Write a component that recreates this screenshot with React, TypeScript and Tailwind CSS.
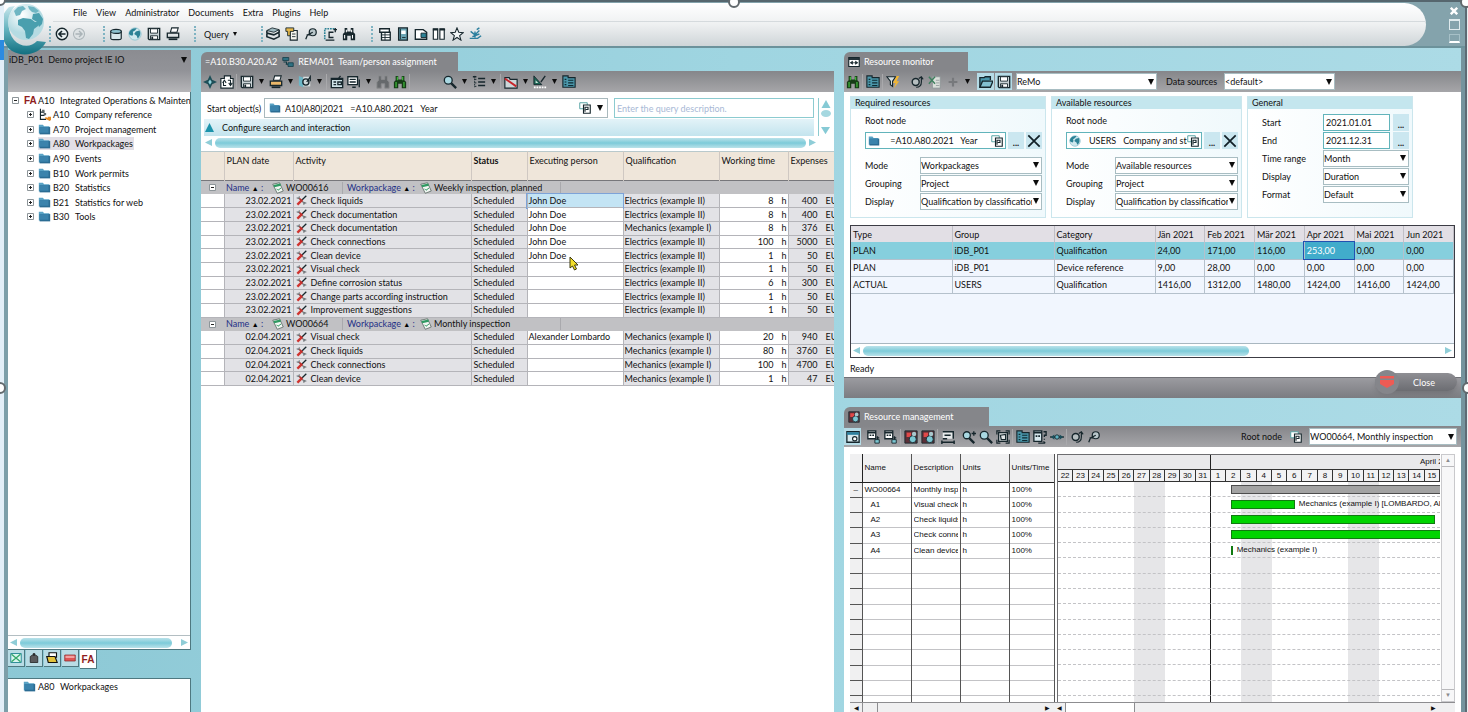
import React from 'react';

const INK = '#16262c';
const TEAL = '#2c8296';

/* Small 16x16 drawings used by the toolbars */
const icons: Record<string, React.ReactNode> = {
  back: <><circle cx="8" cy="8" r="6.5" fill="#e8f0f2" stroke={INK} strokeWidth="1.6" /><path d="M12 8H5M8 4.5L4.5 8L8 11.5" fill="none" stroke={INK} strokeWidth="1.8" /></>,
  forward: <><circle cx="8" cy="8" r="6.3" fill="#dde2e4" stroke="#aab4b8" strokeWidth="1.2" /><path d="M4 8h7M8 4.5L11.5 8L8 11.5" fill="none" stroke="#aab4b8" strokeWidth="1.6" /></>,
  database: <><path d="M2 5v8c0 2 12 2 12 0V5z" fill="#d5e6ea" stroke={INK} strokeWidth="1.3" /><ellipse cx="8" cy="5" rx="6" ry="2.3" fill="#8cc3d0" stroke={INK} strokeWidth="1.3" /></>,
  globe: <><circle cx="8" cy="8" r="7" fill="#cfe8ee" stroke="#8cc3d0" /><path d="M1 7c1-4 5-6 9-5.5L8 4 5.5 5.5 6 8l-1 2-3-1zM9 5l4-1c2 3 1 7-2 9l-1-3-3-2z" fill={TEAL} /></>,
  save: <><path d="M1.5 1.5h13v13h-12l-1-1z" fill="#c9d3d6" stroke={INK} strokeWidth="1.5" /><path d="M4 2h8v5H4zM4 10h8v4H4z" fill="#fff" stroke={INK} /><path d="M6 11v3" stroke={INK} strokeWidth="2" /></>,
  print: <><path d="M5 6l1.5-5H14l-1.5 5z" fill="#fff" stroke={INK} strokeWidth="1.2" /><path d="M1.5 7h13v5h-13z" fill="#dfe4e5" stroke={INK} strokeWidth="1.5" /><path d="M3 14h10" stroke={INK} strokeWidth="2" /></>,
  printOrange: <><path d="M5 6l1.5-5H14l-1.5 5z" fill="#fff" stroke={INK} strokeWidth="1.2" /><path d="M1.5 7h13v5h-13z" fill="#e9b76a" stroke={INK} strokeWidth="1.5" /><path d="M3 14h10" stroke={INK} strokeWidth="2" /></>,
  stack: <><path d="M1 4l6-3 8 2-6 3z" fill="#9fb9c0" stroke={INK} /><path d="M1 4v3l8 2 6-3V3M1 8v3l8 3 6-3V7" fill="none" stroke={INK} strokeWidth="1.8" /></>,
  key: <><path d="M6 4h8v11H6z" fill="#f5f5ee" stroke={INK} strokeWidth="1.3" /><path d="M1 1h9v4H6v5H3V5H1z" fill="#e6b84c" stroke={INK} /><path d="M8 8h4M8 11h4" stroke={INK} /></>,
  wrench: <><circle cx="10" cy="6" r="4" fill="#b8c6ca" stroke={INK} strokeWidth="1.4" /><path d="M2 14l2-5 6-3M3 9h4" fill="none" stroke={INK} strokeWidth="1.5" /></>,
  corner: <><path d="M2 14V2h12" fill="none" stroke={TEAL} strokeWidth="1.8" strokeDasharray="2 1" /><path d="M12 6H7v6h5M3 15h10M14 1v5M12 3h4" fill="none" stroke={INK} strokeWidth="1.5" /></>,
  binoc: <><path d="M3 1h3v4h4V1h3v5l2 2v7H10v-5H6v5H1V8l2-2z" fill={INK} /><path d="M3 9v4M12 9v4M5 3v3M11 3v3" stroke="#fff" strokeWidth="1.2" /></>,
  binocGreen: <><path d="M3 1h3v4h4V1h3v5l2 2v7H10v-5H6v5H1V8l2-2z" fill="#153c16" /><path d="M3.5 8v6M12.5 8v6M5 2v4M11 2v4" stroke="#3fb53a" strokeWidth="1.5" /></>,
  binocDim: <path d="M3 1h3v4h4V1h3v5l2 2v7H10v-5H6v5H1V8l2-2z" fill="#66696c" stroke="#8a8b8e" />,
  sheet: <><path d="M2 2h11v4H2zM4 6h10v9H4z" fill="#fff" stroke={INK} strokeWidth="1.5" /><path d="M4 9h10M4 12h10M8 6v9" stroke={INK} /></>,
  book: <><path d="M3 1h10v14H3z" fill="#6aa5b4" stroke={INK} strokeWidth="1.5" /><path d="M6 4h5v4H6z" fill="#fff" /><path d="M5 2v12M7 12h4" stroke={INK} /></>,
  windowDoc: <><path d="M1.5 3h9l4 3v8h-13z" fill="#fff" stroke={INK} strokeWidth="1.5" /><path d="M8 7h6v5H8z" fill={TEAL} stroke={INK} /></>,
  columns: <><path d="M1.5 2h5v12h-5zM9 2h5v12H9z" fill="#fff" stroke={INK} strokeWidth="1.3" /><path d="M1 3h6M9 3h6" stroke={INK} strokeWidth="2" /></>,
  star: <path d="M8 1l2 5 5 .5-4 3.3L12.5 15 8 12l-4.500 3L5 9.800 1 6.5 6 6z" fill="#f2f6f7" stroke={INK} strokeWidth="1.2" />,
  burst: <path d="M2 13h9l4-3M8 12V5M8 9L3 5M8 9l5-5M10 3l3-2M5 11l8-3" fill="none" stroke="#2b7f9e" strokeWidth="1.6" />,
  diamond: <><path d="M8 0l2.5 5.5L16 8l-5.5 2.500L8 16l-2.500-5.500L0 8l5.500-2.500z" fill="#1e4f58" /><path d="M8 5l2 3-2 3-2-3z" fill="#8fd3dc" /></>,
  reload: <><path d="M1 4h4V1h7v3h3v11H1z" fill="#fff" stroke={INK} strokeWidth="1.3" /><path d="M4 7v5h3M3 9l2-3 2 3M12 11V6H9M10 9l2 3 2-3" fill="none" stroke={INK} strokeWidth="1.2" /></>,
  refGear: <><path d="M1 1l5 2v11l-5-2z" fill="#6db6c6" /><path d="M6 2h8v11H6z" fill="#d9e0e2" /><circle cx="9" cy="8" r="3.5" fill="#cfd8da" stroke={INK} strokeWidth="1.5" /><path d="M10 8l4-6v5" fill="none" stroke={INK} strokeWidth="1.5" /></>,
  form: <><path d="M1.5 4h13v10.5h-13z" fill="#cfe3e8" stroke={INK} strokeWidth="1.5" /><path d="M2 5h12M4 8h3M4 11h3M9 8h4v3H9zM12 1l-3 4" fill="none" stroke={INK} strokeWidth="1.5" /></>,
  page: <><path d="M1 2h11v9H1z" fill="#fff" stroke={INK} strokeWidth="1.5" /><path d="M3 5h7M3 8h7M6 14h4M14 5v9" stroke={INK} strokeWidth="1.5" /></>,
  zoom: <><path d="M9 9l6 6" stroke={INK} strokeWidth="2.6" /><circle cx="6" cy="6" r="4.5" fill="#a9d8e2" stroke={INK} strokeWidth="1.5" /></>,
  zoomIn: <><path d="M8 9l6 6" stroke={INK} strokeWidth="2.6" /><circle cx="5.5" cy="6" r="4" fill="#a9d8e2" stroke={INK} strokeWidth="1.5" /><path d="M11 4h5M13.5 1.5v5" stroke={INK} strokeWidth="1.5" /></>,
  tree: <><path d="M3 1v13M3 5h3M3 9h3M3 13h3" stroke={INK} strokeDasharray="2 1" /><path d="M1 2h4M7 4h8M7 8h8M7 12h8" stroke={INK} strokeWidth="1.8" /></>,
  chart: <><path d="M1 3h5l1 2h8v10H1z" fill="#cdd8da" stroke={INK} strokeWidth="1.3" /><path d="M1 4l13 9" stroke="#c8252b" strokeWidth="2.2" /></>,
  ruler: <><path d="M1 11V1l9 10z" fill="#1c6655" stroke={INK} /><path d="M3 9V6l3 3z" fill="#cfe3dc" /><path d="M9 8l5-7" stroke={INK} strokeWidth="1.5" /><path d="M1 14h14" stroke="#fff" strokeWidth="2" strokeDasharray="2 1" /></>,
  building: <><path d="M1 1h6v2h8v11H1z" fill="#4a97ab" stroke={INK} strokeWidth="1.3" /><path d="M3 5h2M3 8h2M3 11h2M7 6h6M7 9h6M7 12h6" stroke="#0e2b33" strokeWidth="1.4" /></>,
  funnel: <><path d="M1 2h10L7.5 7v6L5 11V7z" fill="#d3dee1" stroke={INK} strokeWidth="1.3" /><path d="M12 1l-4 8h3l-2 6 6-8h-3l3-6z" fill="#f2b632" /></>,
  gear: <><circle cx="6.5" cy="8" r="4" fill="#b6bec0" stroke={INK} strokeWidth="1.6" /><path d="M7 14c4 0 6-2 6-6V2M10 4l3-2 2 3" fill="none" stroke={INK} strokeWidth="1.3" /></>,
  excel: <><path d="M5 2h9v13H5z" fill="#dadfda" stroke="#8e9697" /><path d="M1 2l7 8M8 2l-7 8" stroke="#3e7f5e" strokeWidth="1.6" /><path d="M9 6h4M9 9h4M9 12h4" stroke="#949c9d" /></>,
  plus: <path d="M8 3v10M3 8h10" stroke="#77797c" strokeWidth="2.5" />,
  folderOpen: <><path d="M1 14V3h5l1-1h6v4" fill="#4a97ab" stroke={INK} strokeWidth="1.5" /><path d="M1 14l3-7h12l-3 7z" fill="#83c0d0" stroke={INK} strokeWidth="1.5" /></>,
  calendar: <><path d="M1 2h14v12H1z" fill="#fff" stroke={INK} strokeWidth="1.5" /><path d="M1 4h14" stroke={INK} strokeWidth="2.5" /><path d="M3 9l3-2v4zM13 9l-3-2v4zM6 9h4" fill={INK} stroke={INK} /></>,
  resource: <><path d="M1 1h14v14H1z" fill="#5c3038" stroke={INK} /><path d="M3 3h5v5H3z" fill="#e04848" /><circle cx="10" cy="10.5" r="4" fill="#7cc7d3" stroke={INK} /><circle cx="11.5" cy="4.5" r="2.5" fill="#a8c7cc" /></>,
  calOne: <><path d="M1 1h9v9H1z" fill="#fff" stroke={INK} strokeWidth="1.5" /><path d="M1 3h9" stroke={INK} strokeWidth="2" /><path d="M3 6h2M6 6h2M11 9h3M12 7v7" fill="none" stroke={INK} strokeWidth="1.5" /><path d="M9 11h5v4H9z" fill="#7cc7d3" stroke={INK} /></>,
  calAsk: <><path d="M1 1h9v12H1z" fill="#d7e9ee" stroke={INK} strokeWidth="1.5" /><path d="M1 3h9M3 7h2M6 7h2" stroke={INK} strokeWidth="2" /><path d="M12 2h3v4h-2v2M13 10v1M6 15h8M12 13l2 2" fill="none" stroke={INK} strokeWidth="1.5" /></>,
  settingsWin: <><path d="M1 2h14v12H1z" fill="#d7e9ee" stroke={INK} strokeWidth="1.5" /><path d="M1 4h14" stroke="#2b7f9e" strokeWidth="3" /><circle cx="10" cy="10" r="2.5" fill="#fff" stroke={INK} strokeWidth="1.3" /></>,
  timeline: <><path d="M2 2h12v8H2z" fill="#e5e8e9" /><path d="M2 2h12v8M4 6h7M2 10h5M1 14h14M1 12v4M15 12v4" fill="none" stroke={INK} strokeWidth="1.7" /></>,
  fit: <><path d="M3 3h10v10H3z" fill="#dfe4e5" stroke={INK} strokeWidth="1.5" /><path d="M1 5V1h4M11 1h4v4M15 11v4h-4M5 15H1v-4M5 6l6-1v6H6z" fill="none" stroke={INK} strokeWidth="1.4" /></>,
  split: <><path d="M0 8h16" stroke={INK} strokeWidth="1.5" /><path d="M1 8l4-3v6zM15 8l-4-3v6z" fill="#1b4e5a" /><circle cx="8" cy="8" r="2.5" fill="#5fb2c2" stroke={INK} /></>,
  copyRef: <><path d="M1 1h10v8H1z" fill="#fff" stroke="#56a3a5" strokeWidth="1.3" /><path d="M6 4h9v11H6z" fill="#fff" stroke={INK} strokeWidth="1.5" /><path d="M8 13V7h4v3H9" fill="none" stroke={INK} strokeWidth="1.5" /></>,
  folder: <><path d="M1 2h5l1.5 2H14v9H1z" fill="#5aa3c5" /><path d="M2 5h13v9H2z" fill="#2b6c93" /><path d="M2 5h11v7H2z" fill="#3b83ac" /></>,
  company: <><path d="M3 1v13h7M3 5h5M3 9h5" fill="none" stroke={INK} strokeWidth="1.4" /><path d="M5 2h3v3H5zM7 6h3v3H7z" fill="#5b6669" /><path d="M9 12l6 3M12 12h3v3" stroke="#e58a22" strokeWidth="2.2" /></>,
  task: <><path d="M1 4l3 1 1-3M11 14l1-3 3 1" fill="none" stroke="#6d7376" strokeWidth="1.6" /><path d="M4 4l9 9" stroke="#7a7f82" strokeWidth="1.8" /><path d="M15 1L9 7" stroke={INK} strokeWidth="1.8" /><path d="M9 7l-7 7" stroke="#cf3430" strokeWidth="3.4" /><path d="M5 5l4 4" stroke="#b92d2c" strokeWidth="2" /></>,
  order: <><path d="M1 3l9-2 5 11-8 3z" fill="#f3f7f4" stroke="#50605a" /><path d="M2 4l9-2 1 3-9 2z" fill="#2f9a62" /><path d="M6 9l2 2 4-3" fill="none" stroke="#2f9a62" strokeWidth="1.3" /></>,
  links: <><path d="M1 2h8v4H1zM8 9h7v5H8z" fill="#2f7182" stroke="#123a44" /><path d="M2 8h4v3M8 11H5" fill="none" stroke="#123a44" strokeWidth="1.5" /></>,
  cross: <path d="M1.5 1.5l13 13M14.5 1.5l-13 13" stroke="#122027" strokeWidth="2" />,
  greenX: <><path d="M1 2h14v12H1z" fill="#d8f5f0" stroke="#2c8d96" strokeWidth="1.3" /><path d="M2 3l12 10M14 3L2 13" stroke="#35a86a" strokeWidth="1.8" /></>,
  bin: <path d="M3 6l3-2h4l3 2v8H3zM7 2h2v2H7z" fill="#5b5b5d" stroke="#1a1a1a" />,
  yellowFolder: <><path d="M4 1h10v6H4z" fill="#fff" stroke="#111" strokeWidth="1.5" /><path d="M1 6h11l3 8H3z" fill="#e3c23c" stroke="#111" strokeWidth="1.5" /></>,
  minus: <><path d="M1 4h14v8H1z" fill="#de5555" stroke="#8a2a2a" /><path d="M2 5h12v3H2z" fill="#f2a0a0" /></>,
};

const Icon = ({ name, className = 'size-[14px]' }: { name: string; className?: string }) => (
  <svg viewBox="0 0 16 16" className={`${className} shrink-0`} aria-hidden="true">{icons[name]}</svg>
);

const Tool = ({ name, on }: { name: string; on?: boolean }) => (
  <button aria-label={name} className={`flex h-[17px] w-[17px] shrink-0 items-center justify-center ${on ? 'bg-[#b5dbe6]' : ''}`}>
    <Icon name={name} />
  </button>
);

const Triangle = ({ className = 'w-[6px]' }: { className?: string }) => (
  <svg viewBox="0 0 8 8" className={`${className} shrink-0`} aria-hidden="true"><path d="M0 0h8L4 8z" fill="#0c0c0c" /></svg>
);

const FaMark = () => (
  <span className="w-[14px] shrink-0 font-['Liberation_Sans',sans-serif] text-[10px] leading-[13px] font-bold text-[#8f1d20]">FA</span>
);

const Caret = () => <span className="flex w-3 shrink-0 justify-center"><Triangle className="w-[5px]" /></span>;
const Sep = () => <span className="mx-px h-4 w-px shrink-0 bg-[#a9a9ac]" />;
const Dots = ({ className }: { className: string }) => <span className={`h-4 w-0 border-l-2 border-dotted border-[#7fb3c2] ${className}`} />;

const Select = ({ label, value, className }: { label: string; value: string; className: string }) => (
  <span className={`relative flex items-center bg-white ${className}`}>
    <select aria-label={label} className="h-full w-full appearance-none border border-[#a8bdc2] bg-transparent pr-[9px] outline-none">
      <option>{value}</option>
    </select>
    <span className="pointer-events-none absolute right-[3px]"><Triangle /></span>
  </span>
);

const HScroll = ({ bar }: { bar: string }) => (
  <div className="flex h-[13px] items-center gap-[3px] bg-white px-[2px]">
    <svg viewBox="0 0 8 8" className="w-[7px] shrink-0"><path d="M8 0v8L0 4z" fill="#8fcdd7" /></svg>
    <div className="flex flex-1">
      <div className={`h-[10px] rounded-full bg-linear-to-b from-[#b9e2ea] via-[#7ccbd9] to-[#b9e2ea] ${bar}`} />
    </div>
    <svg viewBox="0 0 8 8" className="w-[7px] shrink-0"><path d="M0 0v8l8-4z" fill="#8fcdd7" /></svg>
  </div>
);

const Logo = () => (
  <svg viewBox="0 0 48 54" className="h-[54px] w-12" aria-hidden="true">
    <defs>
      <linearGradient id="ring" x1="0" y1="0" x2="0" y2="1">
        <stop offset="0" stopColor="#c8e6ec" /><stop offset=".5" stopColor="#5fb0bd" /><stop offset="1" stopColor="#126f80" />
      </linearGradient>
      <radialGradient id="sea" cx=".4" cy=".3"><stop offset="0" stopColor="#fff" /><stop offset="1" stopColor="#b5dbe2" /></radialGradient>
    </defs>
    <path d="M9 5C-3 16-1 40 12 49c12 7 28 3 34-9l-9-1c-6 7-17 6-23-1C7 29 6 14 15 4z" fill="url(#ring)" />
    <circle cx="26" cy="20" r="18" fill="url(#sea)" />
    <path d="M14 9l4-4 5-1 3 3-4 2-2 4-4 1zM28 4l6 1 5 4-3 2-4-1-3-3z" fill="#6fb6c3" />
    <path d="M18 18l5-2 8 1 4 3 5 0-2 4-4 3-1 5-4 5-3-1-1-7-3-4-4-2z" fill="#4a9fae" />
    <path d="M33 12l6-1 4 6-1 5-3 3-2-5-5-3z" fill="#4a9fae" />
  </svg>
);

const menu = ['File', 'View', 'Administrator', 'Documents', 'Extra', 'Plugins', 'Help'];

const Header = () => (
  <header className="relative flex h-12 shrink-0 border-t-2 border-b-2 border-t-[#56666e] border-b-[#6c929b] bg-[#84a3ac] pt-px">
    <div className="flex min-w-0 flex-1 flex-col rounded-r-full bg-linear-to-b from-white via-[#eef0f1] to-[#cfd5d8] pl-[53px]">
      <nav className="flex h-[19px] items-center gap-[9px] border-b border-[#d5dadd] pl-5">
        {menu.map((m) => <button key={m}>{m}</button>)}
      </nav>
      <div className="flex flex-1 items-center">
        <Dots className="-ml-1 mr-0.5" />
        <Tool name="back" /><Tool name="forward" />
        <Dots className="ml-4 mr-px" />
        {['database', 'globe', 'save', 'print'].map((n) => <span key={n} className="px-px"><Tool name={n} /></span>)}
        <Dots className="ml-3 mr-2" />
        <button className="flex items-center gap-1">Query <Triangle className="w-1" /></button>
        <Dots className="mr-px ml-6" />
        {['stack', 'key', 'wrench', 'corner', 'binoc'].map((n) => <span key={n} className="px-px"><Tool name={n} /></span>)}
        <Dots className="mr-1 ml-3" />
        {['sheet', 'book', 'windowDoc', 'columns', 'star', 'burst'].map((n) => <span key={n} className="pr-px"><Tool name={n} /></span>)}
      </div>
    </div>
    <div className="flex w-[42px] flex-col items-end gap-1 pt-1 pr-2 text-white">
      <button aria-label="Close window"><svg viewBox="0 0 10 10" className="mr-0.5 size-2"><path d="M1 1l8 8M9 1L1 9" stroke="#fff" strokeWidth="3" /></svg></button>
      <button aria-label="Maximize" className="h-[11px] w-[11px] border border-t-2 border-[#dfeaed]" />
      <button aria-label="Minimize" className="h-[9px] w-[11px] border border-b-2 border-[#a6c0c7] border-b-white" />
    </div>
    <div className="absolute top-0 left-0"><Logo /></div>
  </header>
);

const nodes = [
  ['A10', 'Company reference', 'company'],
  ['A70', 'Project management', 'folder'],
  ['A80', 'Workpackages', 'folder'],
  ['A90', 'Events', 'folder'],
  ['B10', 'Work permits', 'folder'],
  ['B20', 'Statistics', 'folder'],
  ['B21', 'Statistics for web', 'folder'],
  ['B30', 'Tools', 'folder'],
];

const Expander = ({ open }: { open?: boolean }) => (
  <button aria-label={open ? 'Collapse' : 'Expand'} className="size-[7px] shrink-0">
    <svg viewBox="0 0 7 7" className="size-[7px]"><path d="M.5.5h6v6h-6z" fill="#fff" stroke="#8d9599" /><path d={open ? 'M2 3.5h3' : 'M2 3.5h3M3.5 2v3'} stroke="#222" /></svg>
  </button>
);

const Sidebar = () => (
  <aside className="flex w-[183px] shrink-0 flex-col pt-0.5">
    <button className="flex h-[42px] items-start justify-between bg-linear-to-b from-[#8b8c91] via-[#929398] to-[#b6b6b9] px-px pt-[3px] pr-1">
      <span className="whitespace-pre">iDB_P01  Demo project IE IO</span>
      <span className="pt-1"><Triangle /></span>
    </button>
    <div className="flex flex-1 flex-col overflow-hidden border-r border-b border-[#4e7880] bg-white">
      <ul className="mt-px mb-auto flex h-[131px] flex-col">
        <li className="flex flex-1 items-center pl-1 whitespace-nowrap">
          <Expander open />
          <span className="ml-[5px] flex"><FaMark /></span>
          <span className="w-[22px] shrink-0">A10</span>Integrated Operations &amp; Maintena
        </li>
        {nodes.map(([id, name, icon]) => (
          <li key={id + name} className="flex flex-1 items-center pl-[19px]">
            <Expander />
            <span className={`ml-1 flex items-center pr-px ${id === 'A80' ? 'bg-[#e2dfe6]' : ''}`}>
              <Icon name={icon} className="size-[13px]" />
              <span className="ml-[2px] w-[22px]">{id}</span>{name}
            </span>
          </li>
        ))}
      </ul>
      <div className="border-t border-[#b3bec2]"><HScroll bar="w-[96%]" /></div>
    </div>
    <div className="flex h-7 items-start gap-px">
      {['greenX', 'bin', 'yellowFolder', 'minus'].map((n) => (
        <button key={n} aria-label={n} className="flex h-[17px] w-[17px] items-center justify-center border-r border-b border-[#4e7880] bg-[#b9dce5]">
          <Icon name={n} className="size-3" />
        </button>
      ))}
      <button className="flex h-[19px] w-[17px] items-center justify-center border-r border-b border-[#4e7880] bg-white"><FaMark /></button>
    </div>
    <div className="h-[34px] border-t border-r border-[#4e7880] bg-white">
      <div className="flex h-[15px] items-center pl-[15px]">
        <Icon name="folder" className="size-[13px]" />
        <span className="ml-[2px] w-[22px]">A80</span>Workpackages
      </div>
    </div>
  </aside>
);

type Row = [activity: string, person: string, qualification: string, hours: number, cost: number];
const E = 'Electrics (example II)';
const M = 'Mechanics (example I)';
const groups: { id: string; title: string; date: string; rows: Row[] }[] = [
  {
    id: 'WO00616', title: 'Weekly inspection, planned', date: '23.02.2021',
    rows: [
      ['Check liquids', 'John Doe', E, 8, 400],
      ['Check documentation', 'John Doe', E, 8, 400],
      ['Check documentation', 'John Doe', M, 8, 376],
      ['Check connections', 'John Doe', E, 100, 5000],
      ['Clean device', 'John Doe', E, 1, 50],
      ['Visual check', '', E, 1, 50],
      ['Define corrosion status', '', E, 6, 300],
      ['Change parts according instruction', '', E, 1, 50],
      ['Improvement suggestions', '', E, 1, 50],
    ],
  },
  {
    id: 'WO00664', title: 'Monthly inspection', date: '02.04.2021',
    rows: [
      ['Visual check', 'Alexander Lombardo', M, 20, 940],
      ['Check liquids', '', M, 80, 3760],
      ['Check connections', '', M, 100, 4700],
      ['Clean device', '', M, 1, 47],
    ],
  },
];

const cell = 'border-r border-b border-[#b4b4b9] py-0 whitespace-nowrap overflow-hidden';

const Assignments = () => (
  <table className="h-[235px] w-full table-fixed border-collapse leading-[12px]">
    <colgroup>
      <col className="w-[23px]" /><col className="w-[69px]" /><col className="w-[178px]" /><col className="w-[56px]" />
      <col className="w-[96px]" /><col className="w-[96px]" /><col className="w-[69px]" /><col />
    </colgroup>
    <thead>
      <tr className="h-[29px] border-t border-b border-t-[#b9c9cc] border-b-[#77777b] bg-[#efe6da] text-left align-top">
        <th />
        {['PLAN date', 'Activity', 'Status', 'Executing person', 'Qualification', 'Working time', 'Expenses'].map((h) => (
          <th key={h} className={`overflow-hidden border-l border-[#cfc8c2] px-[2px] pt-[3px] whitespace-nowrap ${h === 'Status' ? 'font-bold' : 'font-normal'}`}>{h}</th>
        ))}
      </tr>
    </thead>
    {groups.map((g) => (
      <tbody key={g.id}>
        <tr className="h-[13px] border-t border-[#88888c] bg-[#c1c1c4]">
          <td className="p-0"><span className="flex justify-center"><Expander open /></span></td>
          <td colSpan={7} className="p-0">
            <div className="flex h-[12px] items-center whitespace-nowrap">
              <span className="flex w-[119px] items-center border-r border-[#a9a9ad] pl-[2px]">
                <span className="w-[46px] text-[#1e2f86]">Name <span className="text-[7px] text-black">▲</span> :</span>
                <Icon name="order" className="mr-[2px] size-3" />{g.id}
              </span>
              <span className="flex w-[218px] items-center border-r border-[#a9a9ad] pl-1">
                <span className="w-[73px] text-[#1e2f86]">Workpackage <span className="text-[7px] text-black">▲</span> :</span>
                <Icon name="order" className="mr-[2px] size-3" />{g.title}
              </span>
            </div>
          </td>
        </tr>
        {g.rows.map(([activity, person, qualification, hours, cost], i) => (
          <tr key={i} className="h-[13px] bg-[#e2e2e6]">
            <td className={`${cell} bg-white`} />
            <td className={`${cell} pr-px text-right`}>{g.date}</td>
            <td className={cell}>
              <span className="flex items-center gap-1 pl-[2px]"><Icon name="task" className="size-[11px]" />{activity}</span>
            </td>
            <td className={`${cell} pl-[2px]`}>Scheduled</td>
            <td className={`relative border-r border-b border-[#b4b4b9] p-0 pl-px whitespace-nowrap ${g.id === 'WO00616' && i === 0 ? 'bg-[#c3e4f4] outline outline-[#7da3d8]' : 'bg-white'}`}>
              {person}
              {g.id === 'WO00616' && i === 4 && (
                <svg viewBox="0 0 10 15" className="absolute top-[7px] left-[41px] z-10 h-[15px] w-[10px]"><path d="M1 1v11l2.500-2 2 4 2-1-2-4H9z" fill="#f3df2a" stroke="#3c3a10" /></svg>
              )}
            </td>
            <td className={`${cell} pl-px`}>{qualification}</td>
            <td className={`${cell} bg-white`}>
              <span className="flex"><span className="w-[54px] text-right">{hours}</span><span className="ml-2">h</span></span>
            </td>
            <td className={`${cell} border-r-0`}>
              <span className="flex"><span className="w-[29px] shrink-0 text-right">{cost}</span><span className="ml-2">EUR</span></span>
            </td>
          </tr>
        ))}
      </tbody>
    ))}
  </table>
);

const tab = 'flex h-[19px] items-center gap-1 self-start rounded-tl-md bg-[#85868a] text-white';
const toolbar = 'flex h-[21px] shrink-0 items-center bg-linear-to-b from-[#85868a] to-[#a6a6a9]';

const Assignment = () => (
  <section className="flex min-w-0 flex-[633] flex-col pt-1">
    <div className={`${tab} w-[257px] pl-1`}>
      <span>=A10.B30.A20.A2</span><Icon name="links" className="ml-px size-3" /><span className="whitespace-pre">REMA01  Team/person assignment</span>
    </div>
    <div className={toolbar}>
      <Tool name="diamond" /><Tool name="reload" /><Sep />
      <Tool name="save" /><Caret /><Tool name="printOrange" /><Caret /><Tool name="refGear" /><Caret /><Sep />
      <Tool name="form" /><Tool name="page" /><Caret /><Tool name="binocDim" /><Tool name="binocGreen" /><Sep />
      <span className="ml-7"><Sep /></span>
      <Tool name="zoom" /><Caret /><Tool name="tree" /><Caret /><Sep />
      <Tool name="chart" /><Caret /><Tool name="ruler" /><Caret /><Tool name="building" />
    </div>
    <div className="flex-1 overflow-hidden bg-white">
      <div className="flex pt-1.5">
        <div className="flex min-w-0 flex-1 flex-col gap-px pl-[3px]">
          <div className="flex items-center">
            <label htmlFor="start" className="w-[60px] pl-[3px] whitespace-nowrap">Start object(s)</label>
            <div className="mr-1.5 flex h-[20px] flex-1 items-center border border-[#a9b9bd] pr-1">
              <Icon name="folder" className="mx-1 size-3" />
              <input id="start" className="min-w-0 flex-1 outline-none" defaultValue="A10|A80|2021   =A10.A80.2021   Year" />
              <Icon name="copyRef" className="mr-1.5 size-3" />
              <Triangle />
            </div>
            <input aria-label="Query description" placeholder="Enter the query description." className="h-[20px] w-[200px] border border-[#8ccbd0] px-[2px] outline-none placeholder:text-[#a9b9d6]" />
          </div>
          <button className="flex h-[17px] items-center gap-2 bg-linear-to-b from-[#e3f3f8] to-[#c3e4ee] pl-px">
            <svg viewBox="0 0 10 10" className="size-[9px]"><path d="M5 0l5 10H0z" fill="#1d93ab" /></svg>
            Configure search and interaction
          </button>
        </div>
        <div className="mx-1 flex w-3 flex-col items-center justify-between border-l border-[#8ccbd0] pb-0.5 pl-0.5">
          <svg viewBox="0 0 10 20" className="w-[10px]"><path d="M5 2l4.500 8h-9z" fill="#86cad5" /><ellipse cx="5" cy="15.500" rx="5" ry="3.500" fill="#a5d8e0" /></svg>
          <svg viewBox="0 0 10 8" className="w-[9px]"><path d="M0 0h10L5 8z" fill="#86cad5" /></svg>
        </div>
      </div>
      <div className="mb-[2px] pr-4 pl-[2px]"><HScroll bar="w-full" /></div>
      <Assignments />
    </div>
  </section>
);

const Group = ({ title, className, children }: { title: string; className: string; children: React.ReactNode }) => (
  <fieldset className={`h-[122px] min-w-0 border border-[#cbe6ed] bg-linear-to-r from-white to-[#f0f9fc] ${className}`}>
    <div className="h-[12px] bg-[#c4e6ee] pl-1 leading-[12px]">{title}</div>
    {children}
  </fieldset>
);

const Field = ({ label, value, className = 'w-[55px]' }: { label: string; value: string; className?: string }) => (
  <div className="flex h-[18px] items-center">
    <span className={className}>{label}</span>
    <Select label={label} value={value} className="h-[17px] min-w-0 flex-1" />
  </div>
);

const More = () => <button aria-label="Browse" className="flex h-[17px] w-4 shrink-0 items-end justify-center bg-[#cbe7f0] font-bold">...</button>;

const NodeBox = ({ title, icon, value, mode, className, labels }: { title: string; icon: string; value: string; mode: string; className: string; labels: string }) => (
  <Group title={title} className={className}>
    <div className="flex flex-col pt-[5px] pr-[3px] pl-[14px]">
      <label className="flex flex-col gap-[5px]">Root node
        <span className="flex items-center gap-[2px]">
          <span className="flex h-[17px] min-w-0 flex-1 items-center border border-[#62b4bb] bg-white px-[2px]">
            <Icon name={icon} className="size-3" />
            <input className="min-w-0 flex-1 pl-2 outline-none" defaultValue={value} />
            <Icon name="copyRef" className="size-3" />
          </span>
          <More />
          <button aria-label="Clear" className="flex h-[17px] w-4 shrink-0 items-center justify-center bg-[#cbe7f0]"><Icon name="cross" /></button>
        </span>
      </label>
      <div className="mt-[7px] flex flex-col">
        <Field label="Mode" value={mode} className={labels} />
        <Field label="Grouping" value="Project" className={labels} />
        <Field label="Display" value="Qualification by classification" className={labels} />
      </div>
    </div>
  </Group>
);

const months = ['Jän 2021', 'Feb 2021', 'Mär 2021', 'Apr 2021', 'Mai 2021', 'Jun 2021'];
const totals = [
  ['PLAN', 'iDB_P01', 'Qualification', '24,00', '171,00', '116,00', '253,00', '0,00', '0,00'],
  ['PLAN', 'iDB_P01', 'Device reference', '9,00', '28,00', '0,00', '0,00', '0,00', '0,00'],
  ['ACTUAL', 'USERS', 'Qualification', '1416,00', '1312,00', '1480,00', '1424,00', '1416,00', '1424,00'],
];

const Monitor = () => (
  <section className="flex flex-col pt-1">
    <div className={`${tab} w-[124px] pl-1`}><Icon name="calendar" className="size-3" />Resource monitor</div>
    <div className={toolbar}>
      <Tool name="binocGreen" /><Sep /><Tool name="building" /><Sep /><Tool name="funnel" />
      <span className="ml-[7px] flex gap-px"><Tool name="gear" /><Tool name="excel" /><Tool name="plus" /></span><Caret />
      <span className="mx-1 flex gap-px"><Tool name="folderOpen" on /><Tool name="save" on /></span>
      <Select label="Profile" value="ReMo" className="h-[17px] w-[141px]" />
      <span className="mx-[9px] w-[49px] whitespace-nowrap">Data sources</span>
      <Select label="Data sources" value="<default>" className="h-[17px] w-[111px]" />
    </div>
    <div className="bg-white px-1.5 pt-1 pb-[2px]">
      <div className="flex gap-[5px]">
        <NodeBox title="Required resources" icon="folder" value=" =A10.A80.2021   Year" mode="Workpackages" className="w-[196px]" labels="w-[55px]" />
        <NodeBox title="Available resources" icon="globe" value="USERS   Company and staff" mode="Available resources" className="w-[191px]" labels="w-[49px]" />
        <Group title="General" className="w-[166px]">
          <div className="flex flex-col pt-1 pr-[3px] pl-[14px]">
            {[['Start', '2021.01.01'], ['End', '2021.12.31']].map(([k, v]) => (
              <label key={k} className="flex h-[18px] items-center">
                <span className="w-[61px]">{k}</span>
                <input className="mr-[3px] h-[17px] min-w-0 flex-1 border border-[#62b4bb] bg-white px-[2px] outline-none" defaultValue={v} />
                <More />
              </label>
            ))}
            <Field label="Time range" value="Month" className="w-[61px]" />
            <Field label="Display" value="Duration" className="w-[61px]" />
            <Field label="Format" value="Default" className="w-[61px]" />
          </div>
        </Group>
      </div>
      <div className="mt-[7px] flex h-[133px] flex-col border border-[#3c3c44] bg-[#f1f6fe]">
        <table className="w-full table-fixed border-collapse">
          <colgroup>
            <col className="w-[101px]" /><col className="w-[102px]" /><col className="w-[101px]" />
            {months.map((m) => <col key={m} />)}
          </colgroup>
          <thead>
            <tr className="h-4 bg-[#e2dfe5] text-left">
              {['Type', 'Group', 'Category', ...months].map((h) => <th key={h} className="border-r border-[#c0bfc6] p-0 pl-[2px] font-normal whitespace-nowrap">{h}</th>)}
            </tr>
          </thead>
          <tbody>
            {totals.map((row, r) => (
              <tr key={r} className={`h-[17px] border-b border-[#b5c1cc] ${r === 0 ? 'bg-[#86cfdd]' : ''}`}>
                {row.map((v, c) => (
                  <td key={c} className={`border-r border-[#b5c1cc] p-0 pl-[2px] ${r === 0 && c === 6 ? 'bg-[#41accb] text-white outline outline-[#2351b0]' : ''}`}>{v}</td>
                ))}
              </tr>
            ))}
          </tbody>
        </table>
        <div className="mt-auto border-t border-[#a9b7c0]"><HScroll bar="w-2/3" /></div>
      </div>
      <div className="mt-1">Ready</div>
    </div>
    <footer className="flex h-[21px] items-center justify-end border-t border-[#707176] bg-linear-to-b from-[#9b9ba0] to-[#7b7c81]">
      <button className="mr-1 mb-3 flex h-[18px] w-[82px] items-center rounded-full bg-linear-to-b from-[#8f8f94] to-[#6c6d72] text-white shadow-md">
        <span className="flex size-6 items-center justify-center rounded-full bg-[#85868b]">
          <svg viewBox="0 0 14 12" className="w-[14px]"><path d="M0 0h14v2.500H0zM0 4h14v4l-7 4-7-4z" fill="#ee5b54" /></svg>
        </span>
        <span className="ml-3.5">Close</span>
      </button>
    </footer>
  </section>
);

const days = [22, 23, 24, 25, 26, 27, 28, 29, 30, 31, 1, 2, 3, 4, 5, 6, 7, 8, 9, 10, 11, 12, 13, 14, 15];
const weekend = [5, 6, 12, 13, 19, 20];
/* start and end are counted in days from the left edge of the chart */
const tasks: { name: string; text: string; start?: number; end?: number; note?: string; summary?: boolean }[] = [
  { name: 'WO00664', text: 'Monthly inspection', start: 11.3, end: 26, summary: true },
  { name: 'A1', text: 'Visual check', start: 11.3, end: 15.5, note: 'Mechanics (example I) [LOMBARDO, ALEXANDER]' },
  { name: 'A2', text: 'Check liquids', start: 11.3, end: 24.7 },
  { name: 'A3', text: 'Check connections', start: 11.3, end: 26 },
  { name: 'A4', text: 'Clean device', start: 11.3, end: 11.4, note: 'Mechanics (example I)' },
];
const lines = Array.from({ length: 14 }, (_, i) => tasks[i]);

const Chart = () => (
  <div className="flex min-w-0 flex-1 flex-col overflow-hidden border-t border-l border-[#6d6d70]">
    <div className="flex h-[14px] bg-[#e9e9eb]">
      <div className="w-2/5 border-r border-[#222]" />
      <div className="flex-1 overflow-hidden"><div className="-mr-4 text-right leading-[14px] whitespace-nowrap">April 2021</div></div>
    </div>
    <div className="grid h-[13px] grid-cols-[repeat(25,minmax(0,1fr))] border-y border-[#333] bg-[#f2f2f3] text-center leading-[11px]">
      {days.map((d) => <span key={d} className="border-r border-[#333]">{d}</span>)}
    </div>
    <div className="relative flex flex-1 flex-col pb-1.5">
      <div className="absolute inset-0 grid grid-cols-[repeat(25,minmax(0,1fr))]">
        {days.map((d, i) => <span key={d} className={`${weekend.includes(i) ? 'bg-[#e6e6e8]' : ''} ${i === 9 ? 'border-r border-[#222]' : ''}`} />)}
      </div>
      {lines.map((t, i) => (
        <div key={i} className="relative flex flex-1 items-center border-b border-dashed border-[#c3c3c6]">
          {t?.start && t.end && (
            <>
              <div style={{ marginLeft: `${t.start * 4}%`, width: `${(t.end - t.start) * 4}%` }} className={`h-[9px] min-w-[2px] shrink-0 border ${t.summary ? 'border-[#4d4d4d] bg-[#a3a3a3]' : 'border-[#117a11] bg-[#00d400]'}`} />
              <span className="ml-1 leading-[12px] whitespace-nowrap">{t.note}</span>
            </>
          )}
        </div>
      ))}
    </div>
  </div>
);

const Management = () => (
  <section className="flex min-h-0 flex-1 flex-col pt-[9px]">
    <div className={`${tab} w-[145px] shrink-0 pl-1`}><Icon name="resource" className="size-3" />Resource management</div>
    <div className={`${toolbar} pr-1`}>
      <Tool name="settingsWin" on /><span className="w-1" /><Tool name="calOne" /><Tool name="calOne" /><Sep />
      <Tool name="resource" /><Tool name="resource" /><Sep /><Tool name="timeline" /><span className="w-1" />
      <Tool name="zoomIn" /><Tool name="zoom" /><Tool name="fit" /><Sep />
      <Tool name="building" /><Tool name="calAsk" /><Tool name="split" /><Sep />
      <Tool name="gear" /><Tool name="wrench" />
      <span className="mr-2 ml-auto">Root node</span>
      <Icon name="copyRef" className="mr-[7px] size-3" />
      <Select label="Root node" value="WO00664, Monthly inspection" className="h-[17px] w-[148px]" />
    </div>
    <div className="flex min-h-0 flex-1 flex-col bg-white px-1.5 pt-[7px]">
      <div className="flex min-h-0 flex-1 font-['Liberation_Sans',sans-serif] text-[8px]">
        <table className="mr-[2px] h-full w-[205px] table-fixed border-collapse leading-[12px]">
          <colgroup><col className="w-[12px]" /><col className="w-[49px]" /><col className="w-[49px]" /><col className="w-[49px]" /><col /></colgroup>
          <thead>
            <tr className="h-[28px] border-b border-[#222] bg-[#f0f0f1] text-left">
              <th className="border-r border-[#222]" />
              {['Name', 'Description', 'Units', 'Units/Time'].map((h) => <th key={h} className="border-r border-[#555] p-0 pl-[2px] font-normal">{h}</th>)}
            </tr>
          </thead>
          <tbody>
            {lines.map((t, i) => (
              <tr key={i} className="h-[15px] border-b border-[#c3c3c6]">
                <td className="border-r border-b border-[#555] bg-[#f0f0f1] p-0 text-center">{i === 0 ? '–' : ''}</td>
                <td className={`border-r border-r-[#555] p-0 ${i ? 'pl-2' : 'pl-[2px]'}`}>{t?.name}</td>
                <td className="border-r border-r-[#555] p-0 pr-[2px] pl-[2px]"><span className="block overflow-hidden whitespace-nowrap">{t?.text}</span></td>
                <td className="border-r border-r-[#555] p-0 pl-[2px]">{t && 'h'}</td>
                <td className="border-r border-r-[#555] p-0 pl-[2px]">{t && '100%'}</td>
              </tr>
            ))}
            <tr className="h-[6px]">
              <td className="border-r border-[#555] bg-[#f0f0f1] p-0" />
              {[1, 2, 3, 4].map((c) => <td key={c} className="border-r border-[#555] p-0" />)}
            </tr>
          </tbody>
        </table>
        <Chart />
        <div className="ml-px flex w-[14px] flex-col justify-between border border-[#c9c9cc] bg-[#f7f7f8]">
          <button className="h-3 border-b border-[#b9b9bc] text-[6px] leading-[11px] text-[#8b8b8e]">▲</button>
          <button className="h-3 border-t border-[#b9b9bc] text-[6px] leading-[11px] text-[#8b8b8e]">▼</button>
        </div>
      </div>
      <div className="flex h-[10px] shrink-0 items-center border-t border-[#8d8d90] bg-[#f0f0f1] text-[6px] leading-none">
        <button className="w-3">◀</button><span className="h-full w-4 border-x border-[#8d8d90]" />
        <span className="w-[163px]" /><button className="w-3">▶</button>
        <button className="w-3">◀</button><span className="h-full w-[70px] border-x border-[#8d8d90] bg-white" />
        <span className="flex-1" /><button className="mr-4 w-3">▶</button>
      </div>
    </div>
  </section>
);

export default function App() {
  return (
    <div className="relative flex h-screen flex-col overflow-hidden bg-linear-to-r from-[#8cc8d5] via-[#9fd5e1] to-[#acdbe6] font-['Lato','Noto_Sans',sans-serif] text-[9px] leading-[13px] text-[#111]">
      <Header />
      <main className="flex min-h-0 flex-1 gap-[10px] border-r-[7px] border-l-8 border-r-[#75949e] border-l-[#7d9fa9]">
        <Sidebar />
        <Assignment />
        <div className="flex min-w-0 flex-[617] flex-col">
          <Monitor />
          <Management />
        </div>
      </main>
      <span className="absolute top-0 left-0 h-full w-1 bg-[#e3eff8]" />
      <span className="absolute top-10 left-0 h-5 w-1 bg-[#2b8be0]" />
      <span className="absolute top-0 right-0 h-full w-[3px] border-l-2 border-[#5d6b74] bg-[#e9eef1]" />
      {['-top-1.5 -left-1.5', '-top-1 left-1/2 -ml-1.5', '-top-1 -right-1', 'top-[382px] -left-1.5', 'top-[382px] -right-1.5'].map((p) => (
        <span key={p} className={`absolute size-3 rounded-full border-2 border-[#62696d] bg-white ${p}`} />
      ))}
    </div>
  );
}
